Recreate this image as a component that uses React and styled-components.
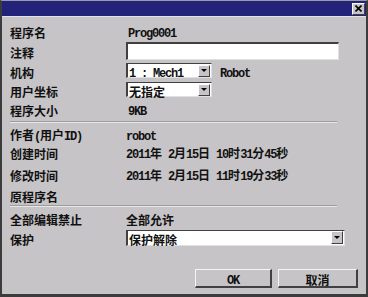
import React from "react";
import styled, { createGlobalStyle } from "styled-components";

const Global = createGlobalStyle`
  html, body { margin: 0; padding: 0; background: #c6c4c6; }
  * { box-sizing: border-box; }
`;

const Window = styled.div`
  width: 368px;
  height: 297px;
  background: #c6c4c6;
  border-left: 2px solid #3c3c3c;
  border-right: 2px solid #3c3c3c;
  border-bottom: 3px solid #3c3c3c;
  border-top: 1px solid #9a9aa8;
  display: flex;
  flex-direction: column;
  font-family: "Noto Sans CJK SC", sans-serif;
  color: #111;
`;

const TitleBar = styled.div`
  height: 16px;
  background: #23237a;
  display: flex;
  align-items: center;
  justify-content: flex-end;
  padding-right: 1px;
  border-bottom: 1px solid #e2e2ea;
`;

const CloseButton = styled.div`
  width: 13px;
  height: 12px;
  background: #c6c4c6;
  border-top: 1px solid #fff;
  border-left: 1px solid #fff;
  border-right: 1px solid #404040;
  border-bottom: 1px solid #404040;
  display: flex;
  align-items: center;
  justify-content: center;
`;

const Body = styled.div`
  flex: 1;
  display: flex;
  flex-direction: column;
  padding: 4px 8px 0 6px;
`;

const Row = styled.div`
  display: grid;
  grid-template-columns: 118px 1fr;
  align-items: center;
  height: ${(p) => p.$h}px;
`;

const Label = styled.div`
  padding-left: 2px;
  white-space: nowrap;
  line-height: 1;
`;

const Value = styled.div`
  display: flex;
  align-items: center;
  gap: 8px;
  padding-left: ${(p) => (p.$pad ? 2 : 0)}px;
  white-space: nowrap;
  line-height: 1;
`;

const Text = styled.span`
  white-space: pre;
  line-height: 1;
`;

const Latin = styled.span`
  font-family: "Liberation Mono", monospace;
  font-size: 12px;
  font-weight: 700;
  letter-spacing: -1.2px;
  white-space: pre;
`;

const Cjk = styled.span`
  font-family: "Noto Sans CJK SC", sans-serif;
  font-size: 12px;
  font-weight: 700;
`;

const Separator = styled.div`
  height: 2px;
  width: 327px;
  margin: ${(p) => p.$m};
  border-top: 1px solid #9c9c9c;
  border-bottom: 1px solid #e8e8e8;
`;

const TextInput = styled.div`
  width: 213px;
  height: 18px;
  background: #fff;
  border-top: 2px solid #404040;
  border-left: 2px solid #404040;
  border-right: 1px solid #e0e0e0;
  border-bottom: 1px solid #e0e0e0;
`;

const Select = styled.div`
  width: ${(p) => p.$w}px;
  height: ${(p) => p.$hh}px;
  background: #fff;
  border-top: 1px solid #404040;
  border-left: 2px solid #404040;
  border-right: 1px solid #e0e0e0;
  border-bottom: 1px solid #e0e0e0;
  display: flex;
  align-items: center;
  justify-content: space-between;
  padding-left: 1px;
  padding-right: 1px;
  line-height: 1;
`;

const Arrow = styled.div`
  width: 12px;
  height: ${(p) => p.$hh}px;
  background: #c6c4c6;
  border-top: 1px solid #fff;
  border-left: 1px solid #fff;
  border-right: 1px solid #404040;
  border-bottom: 1px solid #404040;
  display: flex;
  align-items: center;
  justify-content: center;
  &::after {
    content: "";
    border-left: 3px solid transparent;
    border-right: 3px solid transparent;
    border-top: 3px solid #000;
  }
`;

const ButtonRow = styled.div`
  display: flex;
  justify-content: flex-end;
  gap: 6px;
  margin-top: 22px;
`;

const Button = styled.div`
  width: ${(p) => p.$w}px;
  height: 19px;
  background: #c6c4c6;
  border-top: 1px solid #f4f4f4;
  border-left: 1px solid #f4f4f4;
  border-right: 2px solid #404040;
  border-bottom: 2px solid #404040;
  display: flex;
  align-items: center;
  justify-content: center;
  line-height: 1;
`;

const Mixed = ({ text }) => (
  <Text>
    {text
      .split(/([\x00-\x7F]+)/)
      .filter(Boolean)
      .map((s, i) =>
        /^[\x00-\x7F]+$/.test(s) ? (
          <Latin key={i}>{s}</Latin>
        ) : (
          <Cjk key={i}>{s}</Cjk>
        )
      )}
  </Text>
);

const CloseIcon = () => (
  <svg width="7" height="7" viewBox="0 0 7 7">
    <path d="M0.5 0.5 L6.5 6.5 M6.5 0.5 L0.5 6.5" stroke="#000" strokeWidth="1.6" />
  </svg>
);

export default function App() {
  return (
    <>
      <Global />
      <Window>
        <TitleBar>
          <CloseButton>
            <CloseIcon />
          </CloseButton>
        </TitleBar>
        <Body>
          <Row $h={20}>
            <Label><Mixed text="程序名" /></Label>
            <Value $pad><Mixed text="Prog0001" /></Value>
          </Row>
          <Row $h={20}>
            <Label><Mixed text="注释" /></Label>
            <Value><TextInput /></Value>
          </Row>
          <Row $h={19}>
            <Label><Mixed text="机构" /></Label>
            <Value>
              <Select $w={86} $hh={15}>
                <Mixed text="1 : Mech1" />
                <Arrow $hh={12} />
              </Select>
              <Mixed text="Robot" />
            </Value>
          </Row>
          <Row $h={19}>
            <Label><Mixed text="用户坐标" /></Label>
            <Value>
              <Select $w={86} $hh={15}>
                <Mixed text="无指定" />
                <Arrow $hh={12} />
              </Select>
            </Value>
          </Row>
          <Row $h={19}>
            <Label><Mixed text="程序大小" /></Label>
            <Value $pad><Mixed text="9KB" /></Value>
          </Row>
          <Separator $m="3px 0 1px 2px" />
          <Row $h={19}>
            <Label><Mixed text="作者(用户ID)" /></Label>
            <Value><Mixed text="robot" /></Value>
          </Row>
          <Row $h={18}>
            <Label><Mixed text="创建时间" /></Label>
            <Value><Mixed text="2011年 2月15日 10时31分45秒" /></Value>
          </Row>
          <Row $h={25}>
            <Label><Mixed text="修改时间" /></Label>
            <Value><Mixed text="2011年 2月15日 11时19分33秒" /></Value>
          </Row>
          <Row $h={18}>
            <Label><Mixed text="原程序名" /></Label>
            <Value />
          </Row>
          <Separator $m="1px 0 1px 2px" />
          <Row $h={20}>
            <Label><Mixed text="全部编辑禁止" /></Label>
            <Value><Mixed text="全部允许" /></Value>
          </Row>
          <Row $h={19}>
            <Label><Mixed text="保护" /></Label>
            <Value>
              <Select $w={219} $hh={16}>
                <Mixed text="保护解除" />
                <Arrow $hh={13} />
              </Select>
            </Value>
          </Row>
          <ButtonRow>
            <Button $w={77}><Mixed text="OK" /></Button>
            <Button $w={80}><Mixed text="取消" /></Button>
          </ButtonRow>
        </Body>
      </Window>
    </>
  );
}
